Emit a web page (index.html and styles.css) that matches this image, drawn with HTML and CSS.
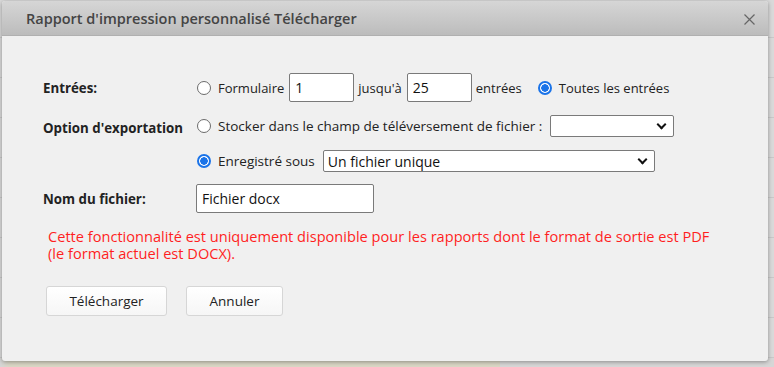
FILE: index.html
```html
<!DOCTYPE html>
<html lang="fr">
<head>
  <meta charset="UTF-8">
  <title>Rapport d'impression personnalisé Télécharger</title>
  <link rel="stylesheet" href="styles.css">
</head>
<body>
  <div class="page">
    <div class="table-bg">
      <div class="bg-row"></div>
      <div class="bg-row"></div>
      <div class="bg-row"></div>
      <div class="bg-row"></div>
      <div class="bg-row"></div>
      <div class="bg-row"></div>
      <div class="bg-row"></div>
      <div class="bg-row"></div>
      <div class="bg-row last">
        <span class="c-date">2025/02/28</span>
        <span class="c-type">Particulier</span>
        <span class="c-mode">Expédition</span>
        <span class="c-amount">£2 158,2</span>
        <span class="c-name">Clarissa Traoré</span>
      </div>
    </div>

    <div class="dialog">
      <div class="dialog-header">
        <span class="dialog-title">Rapport d'impression personnalisé Télécharger</span>
        <svg class="close" width="11" height="11" viewBox="0 0 11 11">
          <path d="M0.5 0.5 L10.5 10.5 M10.5 0.5 L0.5 10.5" stroke="#666" stroke-width="1.2" fill="none"/>
        </svg>
      </div>

      <div class="dialog-body">
        <div class="form-row">
          <div class="label">Entrées:</div>
          <div class="field entries">
            <label class="radio"><span class="dot"></span>Formulaire</label>
            <input class="num" type="text" value="1">
            <span class="txt">jusqu'à</span>
            <input class="num" type="text" value="25">
            <span class="txt">entrées</span>
            <label class="radio on spaced"><span class="dot"></span>Toutes les entrées</label>
          </div>
        </div>

        <div class="form-row export">
          <div class="label">Option d'exportation</div>
          <div class="field-stack">
            <div class="field">
              <label class="radio"><span class="dot"></span>Stocker dans le champ de téléversement de fichier :</label>
              <div class="select small"><span></span><i class="chev"></i></div>
            </div>
            <div class="field">
              <label class="radio on"><span class="dot"></span>Enregistré sous</label>
              <div class="select wide"><span>Un fichier unique</span><i class="chev"></i></div>
            </div>
          </div>
        </div>

        <div class="form-row">
          <div class="label">Nom du fichier:</div>
          <div class="field">
            <input class="name" type="text" value="Fichier docx">
          </div>
        </div>

        <p class="warning">Cette fonctionnalité est uniquement disponible pour les rapports dont le format de sortie est PDF<br>(le format actuel est DOCX).</p>

        <div class="actions">
          <button class="btn dl">Télécharger</button>
          <button class="btn cancel">Annuler</button>
        </div>
      </div>
    </div>
  </div>
</body>
</html>
```

FILE: styles.css
```css
* {
  margin: 0;
  padding: 0;
  box-sizing: border-box;
}

html, body {
  width: 100%;
  height: 100%;
}

body {
  font-family: 'Open Sans', 'Noto Sans', sans-serif;
  font-size: 13.5px;
  color: #222;
  overflow: hidden;
}

.page {
  position: relative;
  width: 774px;
  height: 367px;
  background: #d9d9d9;
  overflow: hidden;
}

/* table behind the modal */
.table-bg {
  display: flex;
  flex-direction: column;
  padding-top: 37px;
}

.bg-row {
  height: 40px;
  border-top: 1px solid #c8c8c8;
}

.bg-row.last {
  display: flex;
  align-items: flex-start;
  height: 40px;
  padding-top: 6px;
  color: #8a8a8a;
  font-size: 14px;
  background: linear-gradient(to right, #d6d6d6 0, #d9d6c4 10px, #d9d6c4 500px, #d6d6d6 500px);
}

.c-date { margin-left: 24px; width: 192px; }
.c-type { width: 152px; }
.c-mode { width: 217px; }
.c-amount { width: 63px; }

/* modal */
.dialog {
  position: absolute;
  left: 2px;
  top: 1px;
  width: 766px;
  height: 360px;
  background: #f0f0f0;
  border-radius: 3px;
  box-shadow: 0 1px 4px rgba(0,0,0,0.35);
  overflow: hidden;
}

.dialog-header {
  height: 35px;
  display: flex;
  align-items: center;
  justify-content: space-between;
  padding: 0 13px 0 24px;
  background: linear-gradient(#d6d6d6, #bcbcbc);
  border-bottom: 1px solid #b0b0b0;
}

.dialog-title {
  font-size: 14.5px;
  font-weight: 600;
  color: #444;
}

.close {
  margin-top: 2px;
}

.dialog-body {
  padding: 37px 0 0 41px;
}

.form-row {
  display: flex;
  align-items: center;
  margin-bottom: 13px;
}

.form-row.export {
  align-items: flex-start;
  margin-bottom: 12px;
}

.export .label {
  margin-top: 4px;
}

.label {
  width: 154px;
  font-size: 13.3px;
  font-weight: 700;
  color: #222;
}

.field {
  display: flex;
  align-items: center;
}

.field.entries {
  font-size: 13px;
}

.field-stack {
  display: flex;
  flex-direction: column;
  gap: 13px;
}

.radio {
  display: flex;
  align-items: center;
  gap: 7px;
}

.radio.spaced {
  margin-left: 12px;
}

.dot {
  width: 14px;
  height: 14px;
  border-radius: 50%;
  border: 1px solid #6b6b6b;
  background: #fff;
  flex-shrink: 0;
}

.radio.on .dot {
  border: 2px solid #1a73e8;
  background: radial-gradient(circle, #1a73e8 0, #1a73e8 3.5px, #fff 4px);
}

.txt {
  margin: 0 4px;
}

input {
  font-family: inherit;
  font-size: 14px;
  color: #111;
  border: 1px solid #7a7a7a;
  border-radius: 2px;
  background: #fff;
  outline: none;
}

.num {
  width: 65px;
  height: 29px;
  padding: 0 5px;
  margin-left: 5px;
}

.txt + .num {
  margin-left: 1px;
}

.name {
  width: 178px;
  height: 29px;
  padding: 0 5px;
  margin-left: -1px;
}

.select {
  display: flex;
  align-items: center;
  justify-content: space-between;
  height: 22px;
  border: 1px solid #7a7a7a;
  border-radius: 2px;
  background: #fff;
  padding: 0 6px 0 4px;
  font-size: 14px;
  color: #111;
}

.select.small {
  width: 124px;
  margin-left: 8px;
}

.select.wide {
  width: 332px;
  margin-left: 8px;
}

.chev {
  width: 7px;
  height: 7px;
  border-right: 2px solid #111;
  border-bottom: 2px solid #111;
  transform: rotate(45deg);
  margin-top: -4px;
  margin-right: 2px;
}

.warning {
  color: #ff1f1f;
  font-size: 14.6px;
  line-height: 17px;
  margin: 15px 0 0 5px;
}

.actions {
  display: flex;
  gap: 19px;
  margin: 24px 0 0 3px;
}

.btn {
  height: 30px;
  font-family: inherit;
  font-size: 13.5px;
  color: #222;
  background: linear-gradient(#ffffff, #f6f6f6);
  border: 1px solid #d6d6d6;
  border-radius: 3px;
}

.btn.dl {
  width: 121px;
}

.btn.cancel {
  width: 97px;
}
```
